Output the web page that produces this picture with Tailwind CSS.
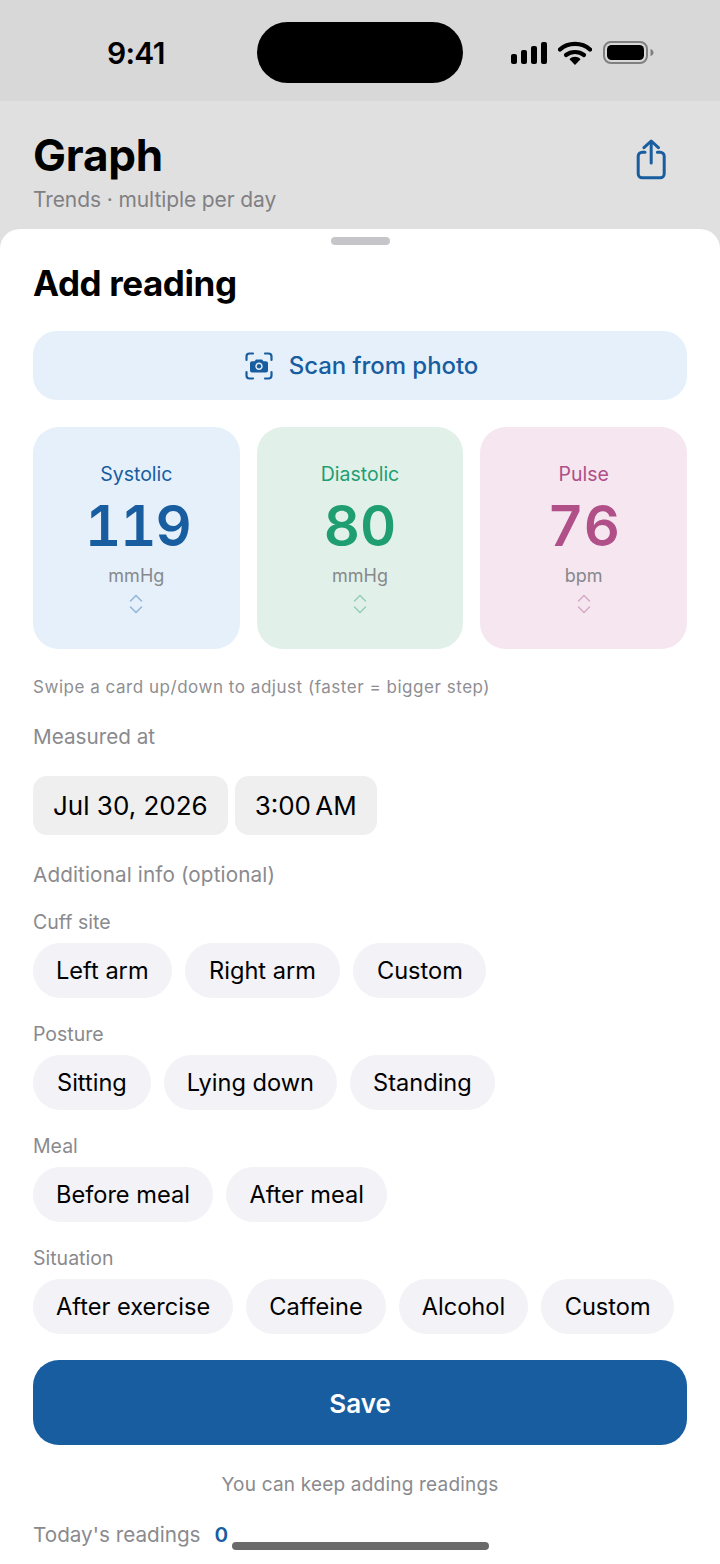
<!DOCTYPE html>
<html lang="en">
<head>
<meta charset="utf-8">
<title>Add reading</title>
<script src="https://cdn.jsdelivr.net/npm/@tailwindcss/browser@4"></script>
</head>
<body class="m-0 bg-white">
<div class="relative flex h-[1564px] w-[720px] flex-col overflow-hidden bg-[#e0e0e0] font-['Inter','Liberation_Sans',sans-serif] text-black">
  <!-- Status bar -->
  <div class="relative h-[101px] shrink-0 bg-[#d8d8d8]">
    <div class="absolute left-[107px] top-[35px] text-[30px] leading-[36px] font-semibold tracking-[-0.7px]">9:41</div>
    <div class="absolute left-[257px] top-[22px] h-[61px] w-[206px] rounded-full bg-black"></div>
    <svg class="absolute left-[510px] top-[40px]" width="38" height="25" viewBox="0 0 38 25" fill="#000">
      <rect x="1" y="14" width="6" height="10" rx="2"/><rect x="11" y="10" width="6" height="14" rx="2"/><rect x="21" y="6" width="6" height="18" rx="2"/><rect x="31" y="2" width="6" height="22" rx="2"/>
    </svg>
    <svg class="absolute left-[558px] top-[40px]" width="34" height="25" viewBox="0 0 34 25" fill="none">
      <path d="M2 9.5C10 2 24 2 32 9.5" stroke="#000" stroke-width="4.4" stroke-linecap="round"/>
      <path d="M8 15C13 11 21 11 26 15" stroke="#000" stroke-width="4.2" stroke-linecap="round"/>
      <path d="M11.5 19.2C14.5 16 19.5 16 22.5 19.2L17 25Z" fill="#000"/>
    </svg>
    <svg class="absolute left-[602px] top-[40px]" width="52" height="26" viewBox="0 0 52 26" fill="none">
      <rect x="2" y="2" width="43" height="21" rx="7" stroke="#808080" stroke-width="2"/>
      <rect x="5" y="5" width="37" height="15" rx="4.5" fill="#000"/>
      <path d="M48.5 9C50.5 9.5 51.5 11 51.5 12.5C51.5 14 50.5 15.5 48.5 16Z" fill="#808080"/>
    </svg>
  </div>

  <!-- Page header -->
  <div class="flex h-[128px] shrink-0 items-start justify-between pl-[33px] pr-[53px]">
    <div>
      <div class="mt-[27px] text-[44px] leading-[54px] font-bold tracking-[-0.2px]">Graph</div>
      <div class="mt-[4px] text-[21px] leading-[28px] text-[#808084] tracking-[-0.1px]">Trends · multiple per day</div>
    </div>
    <svg class="mt-[38px]" width="32" height="42" viewBox="0 0 32 42" fill="none" stroke="#185d9f" stroke-width="3" stroke-linecap="round" stroke-linejoin="round">
      <path d="M10 13.2H7.2C5 13.200 3.200 15 3.200 17.200V34.800C3.200 37 5 38.800 7.200 38.800H25.200C27.400 38.800 29.200 37 29.200 34.800V17.200C29.200 15 27.400 13.200 25.200 13.200H22.400"/>
      <path d="M16.200 24V3"/>
      <path d="M9 8.700L16.200 2L23.400 8.700"/>
    </svg>
  </div>

  <!-- Sheet -->
  <div class="flex min-h-0 flex-1 flex-col rounded-t-[20px] bg-white px-[33px]">
    <div class="mx-auto mt-[8px] h-[8px] w-[59px] shrink-0 rounded-full bg-[#c6c6ca]"></div>
    <h1 class="mt-[18px] text-[35px] leading-[40px] font-bold tracking-[-0.4px]">Add reading</h1>

    <div class="mt-[28px] flex h-[69px] items-center justify-center gap-[16px] rounded-[24px] bg-[#e5f0fb] pl-[3px] text-[#185d9f]">
      <svg width="28" height="28" viewBox="0 0 28 28" fill="none" stroke="#185d9f" stroke-width="2.200" stroke-linecap="round">
        <path d="M1.500 8V4.500C1.500 2.800 2.800 1.500 4.500 1.500H8"/>
        <path d="M20 1.500H23.500C25.200 1.500 26.500 2.800 26.500 4.500V8"/>
        <path d="M26.500 20V23.500C26.500 25.200 25.200 26.500 23.500 26.500H20"/>
        <path d="M8 26.500H4.500C2.800 26.500 1.500 25.200 1.500 23.500V20"/>
        <path fill-rule="evenodd" stroke="none" fill="#185d9f" d="M11 7.500H17L18.500 9.200H21C22.100 9.200 23 10.100 23 11.200V18.500C23 19.600 22.100 20.500 21 20.500H7C5.900 20.500 5 19.600 5 18.500V11.200C5 10.100 5.900 9.200 7 9.200H9.500ZM14 10.500C12 10.500 10.300 12.100 10.300 14.200C10.300 16.300 12 18 14 18C16 18 17.700 16.300 17.700 14.200C17.700 12.100 16 10.500 14 10.500Z"/>
        <circle cx="14" cy="14.200" r="2.200" fill="#185d9f" stroke="none"/>
      </svg>
      <span class="pt-[1px] text-[24px] leading-[30px] font-medium tracking-[-0.05px]">Scan from photo</span>
    </div>

    <!-- Value cards -->
    <div class="mt-[27px] grid grid-cols-3 gap-[17px]">
      <div class="flex h-[222px] flex-col items-center rounded-[26px] bg-[#e5f0fb] pt-[35px]">
        <div class="text-[19.500px] leading-[24px] text-[#185d9f]">Systolic</div>
        <div class="mt-[5px] pl-[3px] text-[56px] leading-[70px] font-semibold tabular-nums tracking-[-1px] text-[#185d9f]">119</div>
        <div class="mt-[4px] text-[18px] leading-[22px] text-[#87888c]">mmHg</div>
        <svg class="mt-[7px]" width="14" height="20" viewBox="0 0 14 20" fill="none" stroke="#185d9f" stroke-opacity="0.4" stroke-width="1.500" stroke-linecap="round" stroke-linejoin="round"><path d="M1.500 7L7 1.500L12.500 7"/><path d="M1.500 13L7 18.500L12.500 13"/></svg>
      </div>
      <div class="flex h-[222px] flex-col items-center rounded-[26px] bg-[#e1f1e9] pt-[35px]">
        <div class="text-[19.500px] leading-[24px] text-[#1f9e72]">Diastolic</div>
        <div class="mt-[5px] text-[56px] leading-[70px] font-semibold tabular-nums text-[#1f9e72]">80</div>
        <div class="mt-[4px] text-[18px] leading-[22px] text-[#87888c]">mmHg</div>
        <svg class="mt-[7px]" width="14" height="20" viewBox="0 0 14 20" fill="none" stroke="#1f9e72" stroke-opacity="0.4" stroke-width="1.500" stroke-linecap="round" stroke-linejoin="round"><path d="M1.500 7L7 1.500L12.500 7"/><path d="M1.500 13L7 18.500L12.500 13"/></svg>
      </div>
      <div class="flex h-[222px] flex-col items-center rounded-[26px] bg-[#f5e6f0] pt-[35px]">
        <div class="text-[19.500px] leading-[24px] text-[#b04f88]">Pulse</div>
        <div class="mt-[5px] text-[56px] leading-[70px] font-semibold tabular-nums text-[#b04f88]">76</div>
        <div class="mt-[4px] text-[18px] leading-[22px] text-[#87888c]">bpm</div>
        <svg class="mt-[7px]" width="14" height="20" viewBox="0 0 14 20" fill="none" stroke="#b04f88" stroke-opacity="0.4" stroke-width="1.500" stroke-linecap="round" stroke-linejoin="round"><path d="M1.500 7L7 1.500L12.500 7"/><path d="M1.500 13L7 18.500L12.500 13"/></svg>
      </div>
    </div>

    <p class="mt-[27px] text-[17px] leading-[22px] tracking-[0.53px] text-[#8e8e93]">Swipe a card up/down to adjust (faster = bigger step)</p>
    <p class="mt-[26px] text-[20.700px] leading-[26px] text-[#8a8a8e]">Measured at</p>

    <div class="mt-[26px] flex gap-[7px]">
      <div class="flex h-[59px] items-center rounded-[14px] bg-[#efefef] px-[20px] text-[26px]">Jul 30, 2026</div>
      <div class="flex h-[59px] items-center rounded-[14px] bg-[#efefef] px-[20px] text-[26px] [word-spacing:-3px]">3:00 AM</div>
    </div>

    <p class="mt-[27px] text-[20.700px] leading-[26px] tracking-[0.12px] text-[#8a8a8e]">Additional info (optional)</p>

    <p class="mt-[22px] text-[19.500px] leading-[24px] text-[#8a8a8e]">Cuff site</p>
    <div class="mt-[9px] flex gap-[13px]">
      <span class="flex h-[55px] items-center rounded-full bg-[#f2f2f7] px-[23px] text-[23.600px]">Left arm</span>
      <span class="flex h-[55px] items-center rounded-full bg-[#f2f2f7] px-[24.500px] text-[23.600px]">Right arm</span>
      <span class="flex h-[55px] items-center rounded-full bg-[#f2f2f7] px-[23.500px] text-[23.600px]">Custom</span>
    </div>

    <p class="mt-[24px] text-[19.500px] leading-[24px] text-[#8a8a8e]">Posture</p>
    <div class="mt-[9px] flex gap-[13px]">
      <span class="flex h-[55px] items-center rounded-full bg-[#f2f2f7] px-[24px] text-[23.600px]">Sitting</span>
      <span class="flex h-[55px] items-center rounded-full bg-[#f2f2f7] px-[23px] text-[23.600px]">Lying down</span>
      <span class="flex h-[55px] items-center rounded-full bg-[#f2f2f7] px-[23px] text-[23.600px]">Standing</span>
    </div>

    <p class="mt-[24px] text-[19.500px] leading-[24px] text-[#8a8a8e]">Meal</p>
    <div class="mt-[9px] flex gap-[13px]">
      <span class="flex h-[55px] items-center rounded-full bg-[#f2f2f7] px-[23px] text-[23.600px]">Before meal</span>
      <span class="flex h-[55px] items-center rounded-full bg-[#f2f2f7] px-[23.500px] text-[23.600px]">After meal</span>
    </div>

    <p class="mt-[24px] text-[19.500px] leading-[24px] text-[#8a8a8e]">Situation</p>
    <div class="mt-[9px] flex gap-[13px]">
      <span class="flex h-[55px] items-center rounded-full bg-[#f2f2f7] px-[23px] text-[23.600px]">After exercise</span>
      <span class="flex h-[55px] items-center rounded-full bg-[#f2f2f7] px-[23px] text-[23.600px]">Caffeine</span>
      <span class="flex h-[55px] items-center rounded-full bg-[#f2f2f7] px-[23px] text-[23.600px]">Alcohol</span>
      <span class="flex h-[55px] items-center rounded-full bg-[#f2f2f7] px-[23.500px] text-[23.600px]">Custom</span>
    </div>

    <div class="mt-[26px] flex h-[85px] shrink-0 items-center justify-center rounded-[26px] bg-[#185d9f] pt-[1px] text-[26px] font-semibold text-white">Save</div>
    <p class="mt-[28px] text-center text-[19px] leading-[24px] tracking-[0.2px] text-[#8a8a8e]">You can keep adding readings</p>
    <div class="mt-[25px] flex items-center gap-[14px] text-[20.700px] leading-[26px]">
      <span class="text-[#8a8a8e]">Today's readings</span>
      <span class="font-semibold text-[#185d9f]">0</span>
    </div>
  </div>

  <div class="absolute bottom-[14px] left-[232px] h-[8px] w-[257px] rounded-full bg-[#6a6a6a]"></div>
</div>
</body>
</html>
